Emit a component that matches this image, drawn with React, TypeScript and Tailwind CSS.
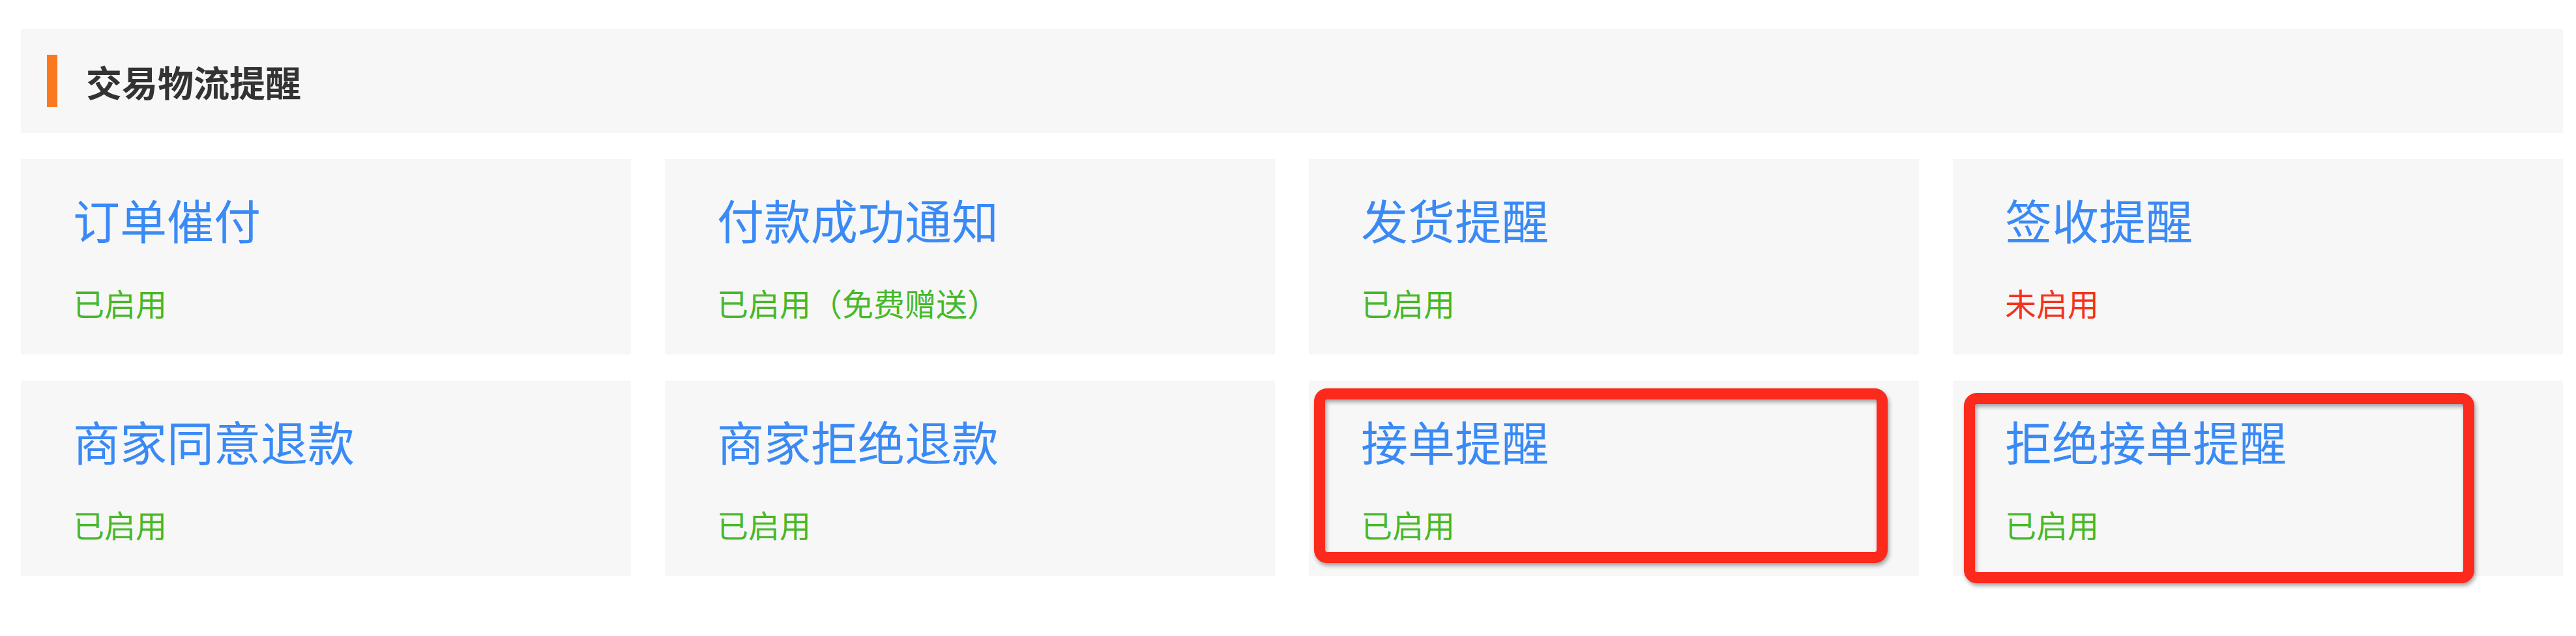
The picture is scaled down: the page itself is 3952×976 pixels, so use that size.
import React from "react";

type Item = { title: string; status: string; on: boolean; mark?: "a" | "b" };

const items: Item[] = [
  { title: "订单催付", status: "已启用", on: true },
  { title: "付款成功通知", status: "已启用（免费赠送）", on: true },
  { title: "发货提醒", status: "已启用", on: true },
  { title: "签收提醒", status: "未启用", on: false },
  { title: "商家同意退款", status: "已启用", on: true },
  { title: "商家拒绝退款", status: "已启用", on: true },
  { title: "接单提醒", status: "已启用", on: true, mark: "a" },
  { title: "拒绝接单提醒", status: "已启用", on: true, mark: "b" },
];

const font = { fontFamily: '"Noto Sans CJK SC", "Noto Sans", sans-serif' };

export default function App() {
  return (
    <div className="w-[3952px] h-[976px] bg-white pl-8 pr-5 pt-[44px]" style={font}>
      <div className="h-[160px] bg-[#f7f7f7] flex items-center pl-10">
        <div className="w-4 h-20 bg-[#fa7820]" />
        <div className="ml-[44px] text-[55px] leading-none font-bold text-[#333333]">交易物流提醒</div>
      </div>
      <div className="mt-10 grid grid-cols-4 gap-x-[52px] gap-y-10">
        {items.map((it) => (
          <div key={it.title} className="relative h-[300px] bg-[#f7f7f7] pl-20 pt-[56px]">
            <div className="text-7xl leading-none text-[#3a8af6]">{it.title}</div>
            <div
              className={
                "mt-[68px] text-5xl leading-none " +
                (it.on ? "text-[#47b82a]" : "text-[#f5321f]")
              }
            >
              {it.status}
            </div>
            {it.mark === "a" && (
              <div className="absolute left-2 top-3 w-[880px] h-[268px] rounded-[20px] border-[17px] border-[#fc2a1c] [filter:drop-shadow(2px_4px_3px_rgba(0,0,0,0.35))]" />
            )}
            {it.mark === "b" && (
              <div className="absolute left-[17px] top-[19px] w-[783px] h-[292px] rounded-[20px] border-[17px] border-[#fc2a1c] [filter:drop-shadow(2px_4px_3px_rgba(0,0,0,0.35))]" />
            )}
          </div>
        ))}
      </div>
    </div>
  );
}
